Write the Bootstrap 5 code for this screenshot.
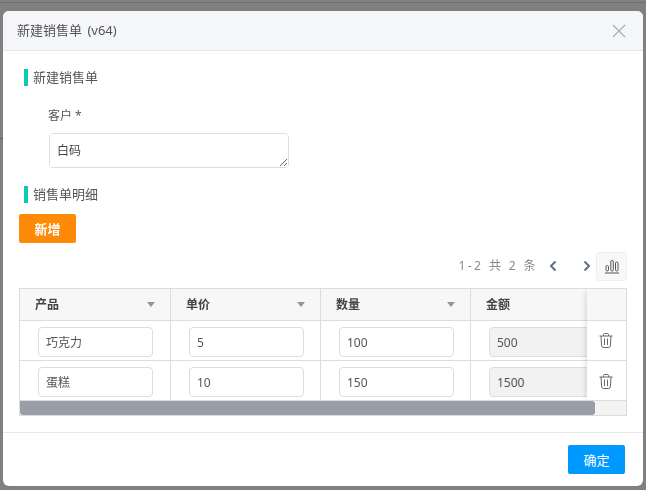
<!DOCTYPE html>
<html>
<head>
  <title>新建销售单</title>
  <link href="https://cdn.jsdelivr.net/npm/bootstrap@5.3.0/dist/css/bootstrap.min.css" rel="stylesheet">
  <style>
    html, body { height: 490px; overflow: hidden; }
    body {
      background: linear-gradient(#2f6d8f, #2f6d8f) 0 138px / 3px 1px no-repeat, linear-gradient(#707070, #707070) 0 2px / 100% 1px no-repeat, #808080;
      padding: 11px 3px 4px; font-family: "Noto Sans", "Noto Sans CJK SC", sans-serif; font-size: 13px; color: #444;
    }
    .sale-dialog { height: 475px; background: #fff; border-radius: 6px; overflow: hidden; }
    .sale-head { height: 40px; background: #f5f6fa; border-bottom: 1px solid #e6e8ee; padding: 0 17px 0 14px; color: #555; word-spacing: 2px; }
    .sale-close { width: 14px; height: 14px; display: block; }
    .sale-body { height: 381px; padding: 18px 16px 0; }
    .sect-title { height: 17px; border-left: 4px solid #0ccbb4; padding-left: 5px; margin-left: 5px; line-height: 17px; color: #555; }
    .cust-label { margin: 21px 0 0 29px; height: 17px; line-height: 17px; color: #555; font-size: 12px; }
    .cust-input { display: block; width: 240px; height: 35px; margin: 9px 0 18px 30px; padding: 8px 7px; border: 1px solid #ddd; border-radius: 4px; font-size: 12px; color: #444; outline: 0; }
    .btn-add, .btn-ok { width: 57px; height: 29px; padding: 2px 0 0; border: 0; border-radius: 2px; color: #fff; font-size: 13px; }
    .btn-add { background: #ff8a08; font-weight: 700; margin-top: 11px; display: block; }
    .btn-ok { background: #0099ff; }
    .pager-bar { height: 30px; margin-top: 8px; color: #888; font-size: 12px; letter-spacing: 2.4px; }
    .pager-arrow { width: 10px; height: 14px; display: block; }
    .chart-btn { width: 31px; height: 29px; background: #f8f8f8; border: 1px solid #eee; border-radius: 3px; margin-left: 4px; }
    .sheet-wrap { position: relative; width: 608px; height: 128px; margin-top: 7px; border: 1px solid #ddd; overflow: hidden; }
    .sheet { width: 720px; table-layout: fixed; border-collapse: separate; border-spacing: 0; }
    .sheet th { height: 32px; background: #f7f7f7; font-size: 12px; font-weight: 700; color: #444; padding: 0 15px; border-right: 1px solid #ddd; border-bottom: 1px solid #ddd; }
    .sheet td { height: 40px; padding: 6px 0 0; vertical-align: top; border-right: 1px solid #ddd; border-bottom: 1px solid #ddd; }
    .head-cell { display: flex; align-items: center; justify-content: space-between; }
    .sort-mark { width: 0; height: 0; border-left: 4px solid transparent; border-right: 4px solid transparent; border-top: 5px solid #8a96a8; }
    .cell-input { display: block; width: 115px; height: 30px; margin-left: 18px; padding: 0 7px; border: 1px solid #ddd; border-radius: 4px; font-size: 12px; color: #555; outline: 0; background: #fff; }
    .cell-input:disabled { background: #f2f2f2; }
    .action-col { position: absolute; top: 0; right: 0; width: 39px; height: 112px; background: #fff; box-shadow: -4px 0 6px -3px rgba(0,0,0,.15); }
    .action-head { height: 32px; background: #f7f7f7; border-bottom: 1px solid #ddd; }
    .action-row { height: 40px; border-bottom: 1px solid #ddd; padding-right: 1px; }
    .action-row:last-child { border-bottom: 0; }
    .scroll-track { position: absolute; left: 0; right: 0; bottom: 0; height: 15px; background: #f3f3f3; border-top: 1px solid #ddd; }
    .scroll-thumb { height: 14px; background: #9a9ea6; border-radius: 0 3px 3px 3px; }
    .sale-foot { height: 54px; border-top: 1px solid #e8e8e8; padding: 12px 18px 0 0; }
  </style>
</head>
<body>
  <div class="sale-dialog">
    <div class="sale-head d-flex align-items-center justify-content-between">
      <span>新建销售单 (v64)</span>
      <svg class="sale-close" viewBox="0 0 14 14" fill="none" stroke="#aaa" stroke-width="1.1"><path d="M1 1l12 12M13 1L1 13"/></svg>
    </div>

    <div class="sale-body">
      <div class="sect-title">新建销售单</div>
      <div class="cust-label">客户 *</div>
      <textarea class="cust-input">白码</textarea>

      <div class="sect-title">销售单明细</div>
      <button class="btn-add" type="button">新增</button>

      <div class="pager-bar d-flex align-items-center justify-content-end">
        <span>1-2 共 2 条</span>
        <svg class="pager-arrow" style="margin-left:10px" viewBox="0 0 10 14" fill="none" stroke="#5f6f8c" stroke-width="2"><path d="M7.5 2.5L3 7l4.500 4.500"/></svg>
        <svg class="pager-arrow" style="margin-left:24px" viewBox="0 0 10 14" fill="none" stroke="#5f6f8c" stroke-width="2"><path d="M2.500 2.500L7 7l-4.500 4.500"/></svg>
        <div class="chart-btn d-flex align-items-center justify-content-center">
          <svg width="16" height="16" viewBox="0 0 16 16" fill="none" stroke="#555" stroke-width="1"><rect x="2" y="7.500" width="2.500" height="5.500" rx="1.200"/><rect x="6.800" y="2.500" width="2.500" height="10.500" rx="1.200"/><rect x="11.500" y="4" width="2.500" height="9" rx="1.200"/><path d="M1 15h14"/></svg>
        </div>
      </div>

      <div class="sheet-wrap">
        <table class="sheet">
          <colgroup><col style="width:151px"><col style="width:150px"><col style="width:150px"><col style="width:269px"></colgroup>
          <thead>
            <tr>
              <th><div class="head-cell">产品<i class="sort-mark"></i></div></th>
              <th><div class="head-cell">单价<i class="sort-mark"></i></div></th>
              <th><div class="head-cell">数量<i class="sort-mark"></i></div></th>
              <th>金额</th>
            </tr>
          </thead>
          <tbody>
            <tr>
              <td><input class="cell-input" value="巧克力"></td>
              <td><input class="cell-input" value="5"></td>
              <td><input class="cell-input" value="100"></td>
              <td><input class="cell-input" value="500" disabled></td>
            </tr>
            <tr>
              <td><input class="cell-input" value="蛋糕"></td>
              <td><input class="cell-input" value="10"></td>
              <td><input class="cell-input" value="150"></td>
              <td><input class="cell-input" value="1500" disabled></td>
            </tr>
          </tbody>
        </table>
        <div class="action-col">
          <div class="action-head"></div>
          <div class="action-row d-flex align-items-center justify-content-center">
            <svg width="14" height="15" viewBox="0 0 14 15" fill="none" stroke="#666" stroke-width="1"><path d="M.5 3h13M4.500 3V1.500a1 1 0 0 1 1-1h3a1 1 0 0 1 1 1V3M2 3l.6 9.500a2 2 0 0 0 2 2h4.800a2 2 0 0 0 2-2L12 3M5.500 5.500v6.500M8.500 5.500v6.500"/></svg>
          </div>
          <div class="action-row d-flex align-items-center justify-content-center">
            <svg width="14" height="15" viewBox="0 0 14 15" fill="none" stroke="#666" stroke-width="1"><path d="M.5 3h13M4.500 3V1.500a1 1 0 0 1 1-1h3a1 1 0 0 1 1 1V3M2 3l.6 9.500a2 2 0 0 0 2 2h4.800a2 2 0 0 0 2-2L12 3M5.500 5.500v6.500M8.500 5.500v6.500"/></svg>
          </div>
        </div>
        <div class="scroll-track"><div class="scroll-thumb" style="width:575px"></div></div>
      </div>
    </div>

    <div class="sale-foot d-flex justify-content-end">
      <button class="btn-ok" type="button">确定</button>
    </div>
  </div>
  <script src="https://cdn.jsdelivr.net/npm/bootstrap@5.3.0/dist/js/bootstrap.bundle.min.js"></script>
</body>
</html>
